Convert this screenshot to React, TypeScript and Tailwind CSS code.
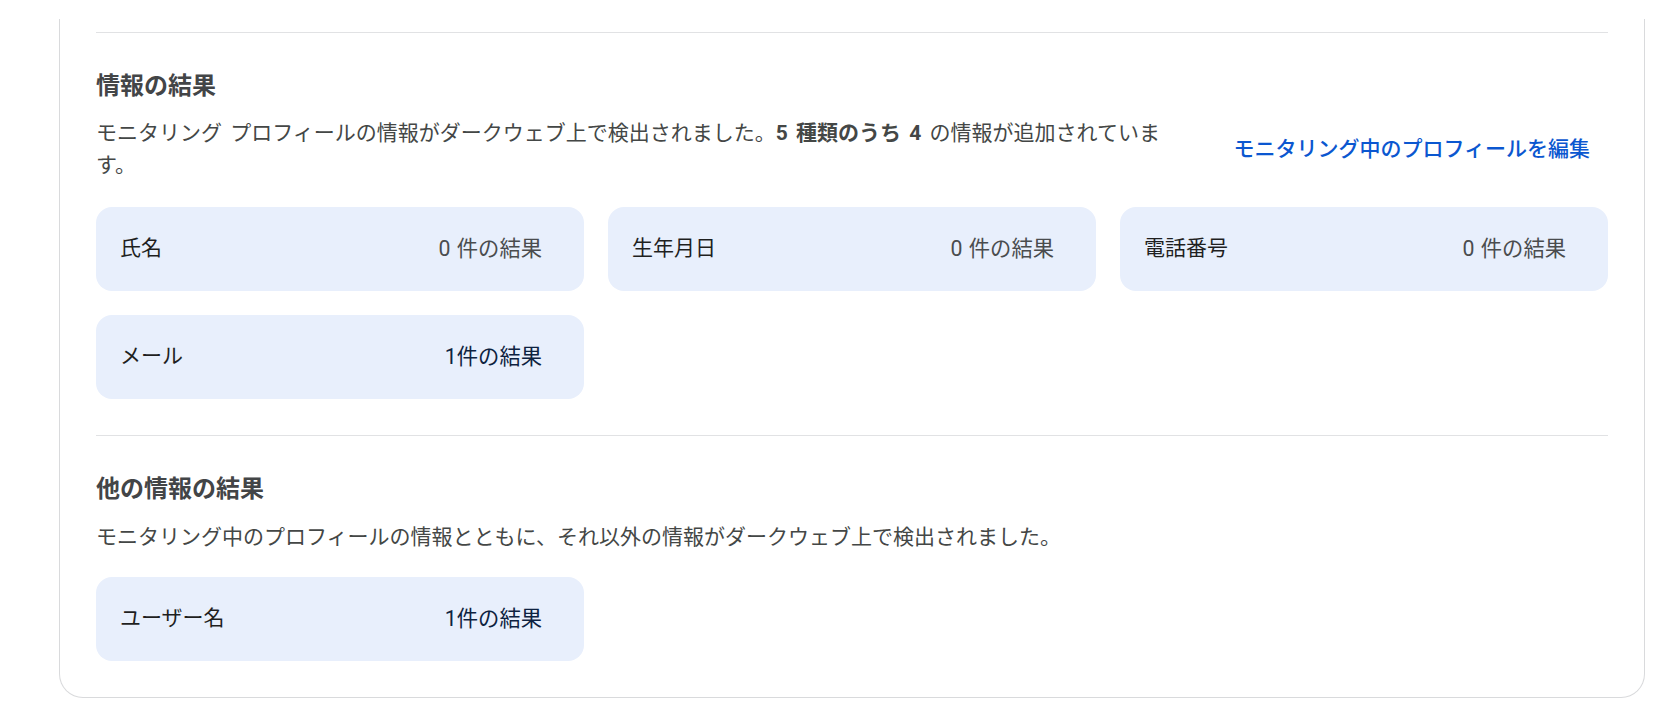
const font = { fontFamily: 'Roboto, "Noto Sans CJK JP", sans-serif' }

type Item = { label: string; value: string; found: boolean }

const profileItems: Item[] = [
  { label: '氏名', value: '0 件の結果', found: false },
  { label: '生年月日', value: '0 件の結果', found: false },
  { label: '電話番号', value: '0 件の結果', found: false },
  { label: 'メール', value: '1件の結果', found: true },
]

const otherItems: Item[] = [{ label: 'ユーザー名', value: '1件の結果', found: true }]

function ResultCard({ item }: { item: Item }) {
  return (
    <div className="flex h-[84px] items-center justify-between rounded-[16px] bg-[#e8effc] pl-[24px] pr-[42px]">
      <span className="text-[21px] text-[#1f1f1f]">{item.label}</span>
      <span className={`text-[21.3px] [word-spacing:1px] ${item.found ? 'text-[#0e2240]' : 'text-[#4a4c4e]'}`}>
        {item.value}
      </span>
    </div>
  )
}

export default function App() {
  return (
    <div className="min-h-[712px] bg-white pt-[19px]" style={font}>
      <section className="ml-[59px] w-[1586px] rounded-b-[24px] border-x border-b border-[#d9dadc] px-[36px] pb-[36px] pt-[13px]">
        <div className="h-px bg-[#e1e2e4]" />

        {/* 情報の結果 */}
        <h2 className="mt-[37px] text-[24px] font-bold leading-[32px] text-[#434547]">情報の結果</h2>
        <div className="mt-[15px] flex items-center">
          <p className="w-[1080px] text-[21px] leading-[32px] text-[#444746] [word-spacing:3px]">
            モニタリング プロフィールの情報がダークウェブ上で検出されました。<span className="font-bold">5 種類のうち 4</span> の情報が追加されています。
          </p>
          <a href="#" className="ml-auto pr-[18px] text-[21px] font-medium leading-[32px] text-[#0b57d0]">
            モニタリング中のプロフィールを編集
          </a>
        </div>
        <div className="mt-[26px] grid grid-cols-3 gap-[24px]">
          {profileItems.map((item) => (
            <ResultCard key={item.label} item={item} />
          ))}
        </div>

        <div className="mt-[36px] h-px bg-[#e1e2e4]" />

        {/* 他の情報の結果 */}
        <h2 className="mt-[37px] text-[24px] font-bold leading-[32px] text-[#434547]">他の情報の結果</h2>
        <p className="mt-[16px] text-[21px] leading-[32px] text-[#444746]">
          モニタリング中のプロフィールの情報とともに、それ以外の情報がダークウェブ上で検出されました。
        </p>
        <div className="mt-[24px] grid grid-cols-3 gap-[24px]">
          {otherItems.map((item) => (
            <ResultCard key={item.label} item={item} />
          ))}
        </div>
      </section>
    </div>
  )
}
